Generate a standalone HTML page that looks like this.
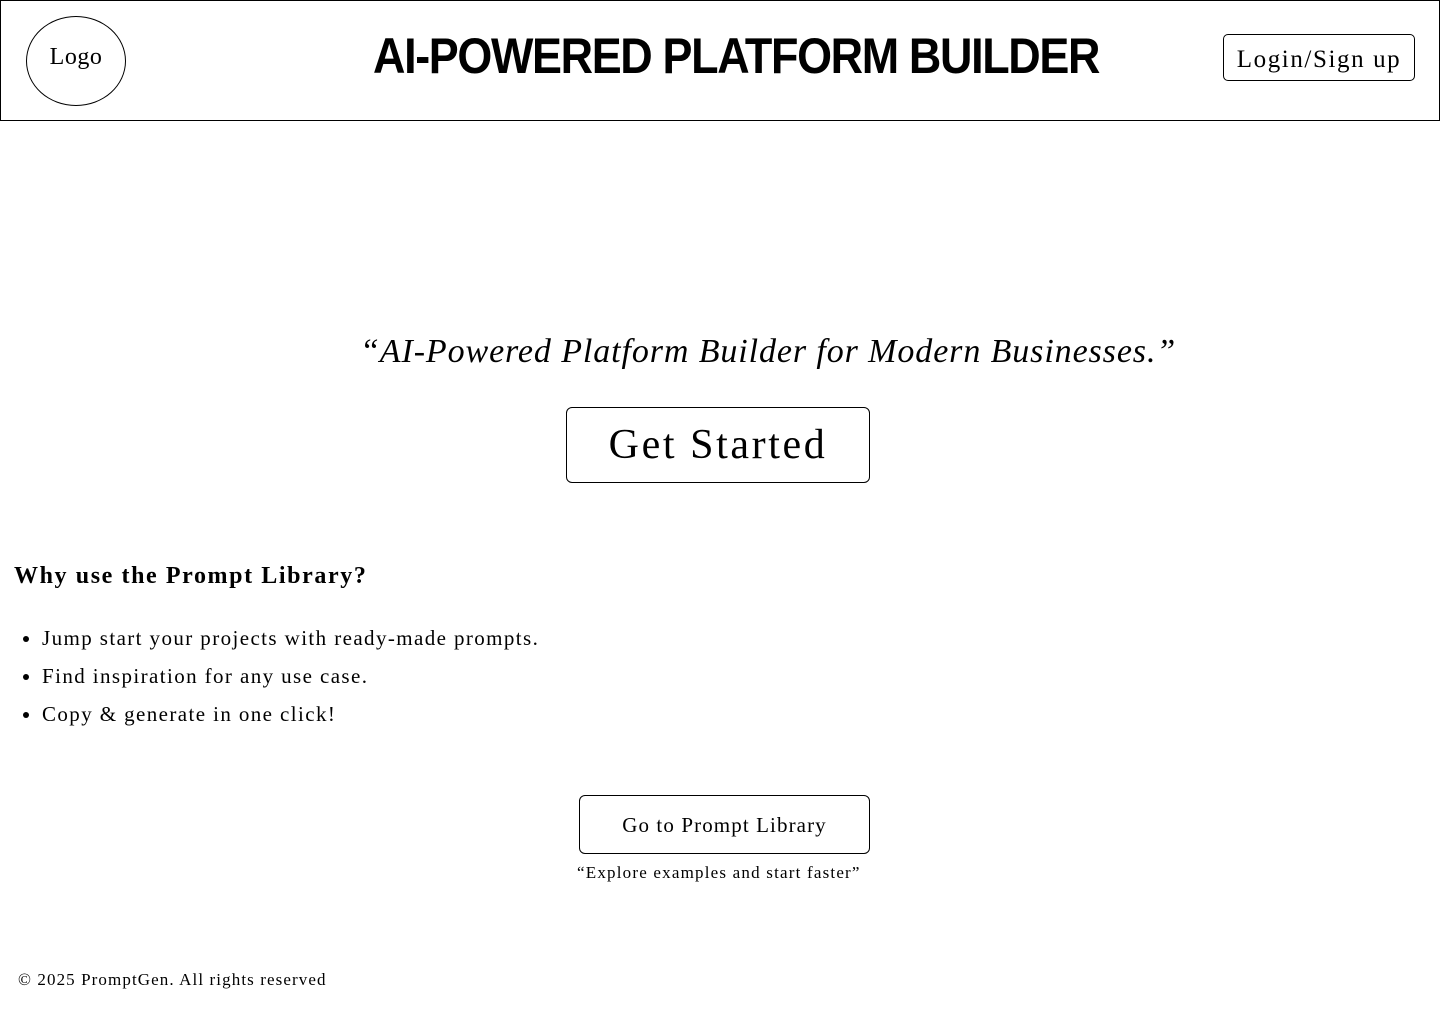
<!DOCTYPE html>
<html><head><meta charset="utf-8"><style>
body{margin:0;width:1440px;height:1024px;background:#fff;position:relative;font-family:"Liberation Serif",serif;color:#000;overflow:hidden}
.hdr{position:absolute;left:0;top:0;width:1438px;height:119px;border:1px solid #000}
.logo{position:absolute;left:25px;top:15px;width:98px;height:88px;border:1px solid #000;border-radius:50%;display:flex;align-items:center;justify-content:center;font-size:24px;letter-spacing:0.5px;padding-bottom:8px;box-sizing:content-box;height:80px}
.title{position:absolute;left:372px;top:25px;white-space:nowrap;font-family:"Liberation Sans",sans-serif;font-weight:bold;font-size:50px;line-height:60px;letter-spacing:-1.5px;transform-origin:left center;transform:scaleX(0.898)}
.login{position:absolute;left:1222px;top:33px;width:192px;height:47px;border:1px solid #000;border-radius:5px;font-size:25px;line-height:49px;text-align:center;box-sizing:border-box;letter-spacing:1.6px}
.quote{position:absolute;left:360px;top:330px;font-style:italic;font-size:34px;line-height:44px;white-space:nowrap;letter-spacing:0.9px}
.gs{position:absolute;left:566px;top:407px;width:302px;height:74px;border:1px solid #000;border-radius:6px;font-size:42px;line-height:74px;text-align:center;letter-spacing:2.6px}
h2{position:absolute;left:14px;top:560px;margin:0;font-size:24px;line-height:32px;letter-spacing:1.6px;white-space:nowrap}
ul{position:absolute;left:0;top:619px;margin:0;padding-left:42px;font-size:21px;letter-spacing:1.4px;white-space:nowrap}
li{line-height:38px}
.pl{position:absolute;left:579px;top:795px;width:289px;height:57px;border:1px solid #000;border-radius:6px;font-size:21px;line-height:58px;text-align:center;letter-spacing:1.1px}
.ex{position:absolute;left:577px;top:861px;font-size:17px;line-height:24px;letter-spacing:1.2px;white-space:nowrap}
.ft{position:absolute;left:18px;top:968px;font-size:17px;line-height:24px;letter-spacing:1.1px;white-space:nowrap}
</style></head><body>
<div class="hdr">
<div class="logo">Logo</div>
<div class="title">AI-POWERED PLATFORM BUILDER</div>
<div class="login">Login/Sign up</div>
</div>
<div class="quote">“AI-Powered Platform Builder for Modern Businesses.”</div>
<div class="gs">Get Started</div>
<h2>Why use the Prompt Library?</h2>
<ul><li>Jump start your projects with ready-made prompts.</li><li>Find inspiration for any use case.</li><li>Copy &amp; generate in one click!</li></ul>
<div class="pl">Go to Prompt Library</div>
<div class="ex">“Explore examples and start faster”</div>
<div class="ft">© 2025 PromptGen. All rights reserved</div>
</body></html>
